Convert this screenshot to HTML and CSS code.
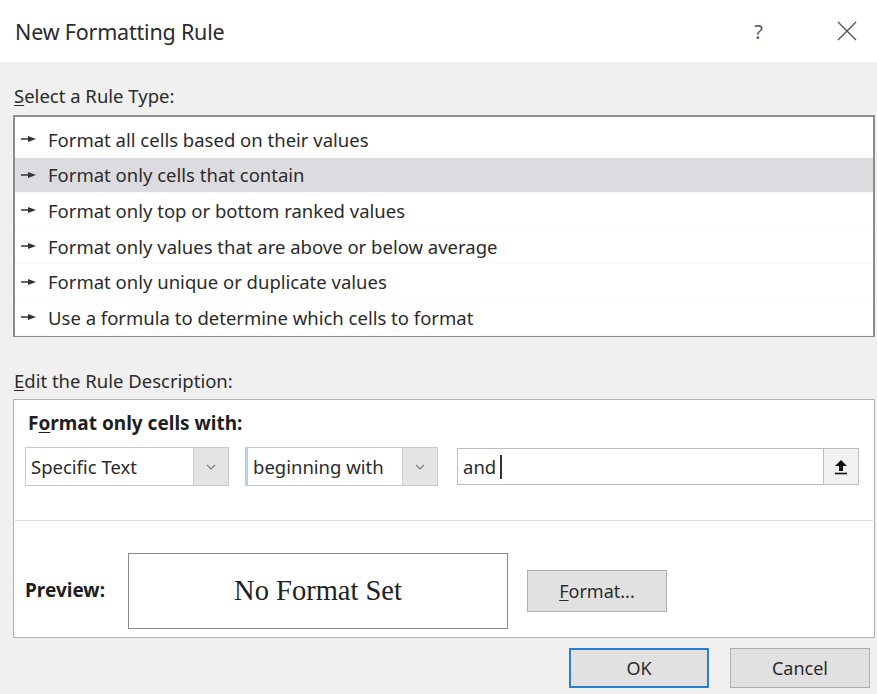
FILE: index.html
```html
<!DOCTYPE html>
<html lang="en">
<head>
<meta charset="utf-8">
<title>New Formatting Rule</title>
<link rel="stylesheet" href="styles.css">
</head>
<body>
<div class="dialog">
  <header class="titlebar">
    <h1 class="title">New Formatting Rule</h1>
    <div class="title-actions">
      <span class="help">?</span>
      <svg class="close" width="20" height="20" viewBox="0 0 20 20"><path d="M1 1L19 19M19 1L1 19" stroke="#555" stroke-width="1.4" fill="none"/></svg>
    </div>
  </header>

  <main class="content">
    <div class="label"><u>S</u>elect a Rule Type:</div>
    <ul class="rule-list">
      <li class="rule"><svg class="bullet" width="15" height="8" viewBox="0 0 15 8"><path d="M0 4H8" stroke="#333" stroke-width="1.5"/><path d="M7 1L15 4L7 7Z" fill="#333"/></svg>Format all cells based on their values</li>
      <li class="rule selected"><svg class="bullet" width="15" height="8" viewBox="0 0 15 8"><path d="M0 4H8" stroke="#333" stroke-width="1.5"/><path d="M7 1L15 4L7 7Z" fill="#333"/></svg>Format only cells that contain</li>
      <li class="rule"><svg class="bullet" width="15" height="8" viewBox="0 0 15 8"><path d="M0 4H8" stroke="#333" stroke-width="1.5"/><path d="M7 1L15 4L7 7Z" fill="#333"/></svg>Format only top or bottom ranked values</li>
      <li class="rule"><svg class="bullet" width="15" height="8" viewBox="0 0 15 8"><path d="M0 4H8" stroke="#333" stroke-width="1.5"/><path d="M7 1L15 4L7 7Z" fill="#333"/></svg>Format only values that are above or below average</li>
      <li class="rule"><svg class="bullet" width="15" height="8" viewBox="0 0 15 8"><path d="M0 4H8" stroke="#333" stroke-width="1.5"/><path d="M7 1L15 4L7 7Z" fill="#333"/></svg>Format only unique or duplicate values</li>
      <li class="rule"><svg class="bullet" width="15" height="8" viewBox="0 0 15 8"><path d="M0 4H8" stroke="#333" stroke-width="1.5"/><path d="M7 1L15 4L7 7Z" fill="#333"/></svg>Use a formula to determine which cells to format</li>
    </ul>

    <div class="label label-edit"><u>E</u>dit the Rule Description:</div>
    <section class="desc-box">
      <div class="criteria">
        <div class="criteria-title">F<u>o</u>rmat only cells with:</div>
        <div class="criteria-row">
          <div class="combo combo-type">
            <span class="combo-text">Specific Text</span>
            <span class="combo-btn"><svg width="10" height="6" viewBox="0 0 10 6"><path d="M1 1L5 5L9 1" stroke="#777" stroke-width="1.1" fill="none"/></svg></span>
          </div>
          <div class="combo combo-op">
            <span class="combo-text">beginning with</span>
            <span class="combo-btn"><svg width="10" height="6" viewBox="0 0 10 6"><path d="M1 1L5 5L9 1" stroke="#777" stroke-width="1.1" fill="none"/></svg></span>
          </div>
          <div class="textfield">
            <span class="field-text">and<span class="caret"></span></span>
            <span class="ref-btn"><svg width="14" height="16" viewBox="0 0 14 16"><path d="M7 1L13 7H9V12H5V7H1Z" fill="#111"/><path d="M1 14.5H13" stroke="#111" stroke-width="1.6"/></svg></span>
          </div>
        </div>
      </div>
      <div class="preview-row">
        <span class="preview-label">Preview:</span>
        <div class="preview-box">No Format Set</div>
        <button class="btn btn-format"><u>F</u>ormat...</button>
      </div>
    </section>

    <footer class="footer">
      <button class="btn btn-ok">OK</button>
      <button class="btn btn-cancel">Cancel</button>
    </footer>
  </main>
</div>
</body>
</html>
```

FILE: styles.css
```css
* {
  box-sizing: border-box;
}

html, body {
  margin: 0;
  padding: 0;
}

body {
  font-family: "Noto Sans", "Open Sans", sans-serif;
  color: #262626;
  background: #f0f0f0;
}

.dialog {
  width: 877px;
  height: 694px;
  display: flex;
  flex-direction: column;
  overflow: hidden;
}

/* Title bar */
.titlebar {
  height: 62px;
  background: #ffffff;
  display: flex;
  align-items: center;
  justify-content: space-between;
  padding: 0 20px 0 15px;
}

.title {
  margin: 0;
  font-size: 21.5px;
  font-weight: 400;
  color: #2b2b2b;
  letter-spacing: -0.2px;
}

.title-actions {
  display: flex;
  align-items: center;
  gap: 74px;
}

.help {
  font-size: 20px;
  color: #555;
}

/* Body */
.content {
  flex: 1;
  background: #f0f0f0;
  padding: 0 2px 0 13px;
  display: flex;
  flex-direction: column;
}

.label {
  font-size: 18.5px;
  height: 53px;
  line-height: 24px;
  padding-top: 22px;
  padding-left: 1px;
  color: #2b2b2b;
}

.label u {
  text-underline-offset: 2px;
}

.label-edit {
  height: 62px;
  padding-top: 32px;
}

.rule-list {
  list-style: none;
  margin: 0;
  padding: 5px 0 0;
  height: 222px;
  background: #ffffff;
  border: 2px solid #8c8c8c;
}

.rule {
  height: 35.6px;
  display: flex;
  align-items: center;
  padding-left: 6px;
  font-size: 18.5px;
  color: #2b2b2b;
  border-bottom: 1px solid #fafafa;
}

.rule.selected {
  background: #dcdce0;
}

.bullet {
  margin-right: 12px;
  flex: none;
}

/* Rule description panel */
.desc-box {
  height: 239px;
  background: #ffffff;
  border: 1px solid #b4b4b4;
  display: flex;
  flex-direction: column;
}

.criteria {
  height: 121px;
  border-bottom: 1px solid #dcdcdc;
  margin: 0 1px;
  padding: 11px 0 0 10px;
}

.criteria-title {
  font-size: 19px;
  font-weight: 700;
  color: #1e1e1e;
  line-height: 24px;
  padding-left: 3px;
}

.criteria-title u {
  text-underline-offset: 2px;
}

.criteria-row {
  display: flex;
  align-items: center;
  margin-top: 12px;
  height: 39px;
}

.combo {
  height: 39px;
  border: 1px solid #c9c9c9;
  display: flex;
  align-items: stretch;
  background: #fff;
}

.combo-type {
  width: 204px;
}

.combo-op {
  width: 193px;
  margin-left: 16px;
  border-left: 3px solid #bcd0e6;
}

.combo-text {
  flex: 1;
  display: flex;
  align-items: center;
  padding-left: 5px;
  font-size: 18.5px;
  color: #2b2b2b;
}

.combo-btn {
  width: 35px;
  background: #e4e4e4;
  border-left: 1px solid #d0d0d0;
  display: flex;
  align-items: center;
  justify-content: center;
}

.textfield {
  margin-left: 19px;
  width: 402px;
  height: 37px;
  border: 1px solid #bdbdbd;
  display: flex;
  align-items: stretch;
}

.field-text {
  flex: 1;
  display: flex;
  align-items: center;
  padding-left: 5px;
  font-size: 18.5px;
  color: #2b2b2b;
}

.caret {
  display: inline-block;
  width: 2px;
  height: 24px;
  margin-left: 4px;
  background: #333;
}

.ref-btn {
  width: 35px;
  background: #f2f2f2;
  border-left: 1px solid #bdbdbd;
  display: flex;
  align-items: center;
  justify-content: center;
}

.preview-row {
  flex: 1;
  display: flex;
  align-items: flex-start;
  padding: 32px 0 0 11px;
}

.preview-label {
  width: 103px;
  font-size: 19px;
  font-weight: 700;
  color: #1e1e1e;
  margin-top: 24px;
}

.preview-box {
  width: 380px;
  height: 76px;
  border: 1px solid #8a8a8a;
  display: flex;
  align-items: center;
  justify-content: center;
  font-family: "Liberation Serif", "DejaVu Serif", serif;
  font-size: 28.5px;
  color: #222;
}

.btn {
  font-family: "Noto Sans", "Open Sans", sans-serif;
  font-size: 18px;
  color: #2b2b2b;
  background: #e1e1e1;
  border: 1px solid #adadad;
  padding: 0;
  cursor: pointer;
}

.btn-format {
  width: 140px;
  height: 42px;
  margin-left: 19px;
  margin-top: 17px;
}

.btn-format u {
  text-underline-offset: 2px;
}

.footer {
  display: flex;
  justify-content: flex-end;
  gap: 21px;
  padding: 10px 5px 0 0;
}

.btn-ok,
.btn-cancel {
  width: 140px;
  height: 40px;
}

.btn-ok {
  border: 2px solid #2a7fcf;
}
```
